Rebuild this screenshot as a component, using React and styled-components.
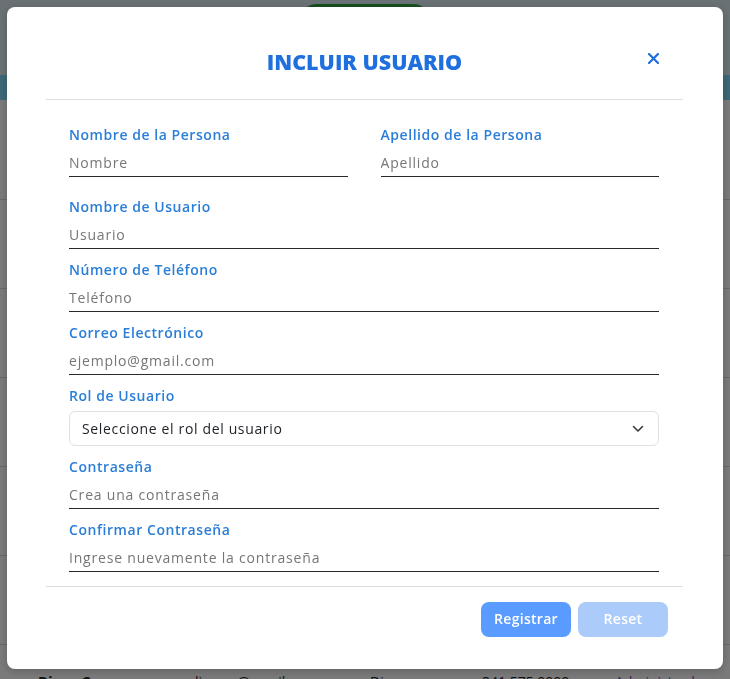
import styled, { createGlobalStyle } from 'styled-components';

const GlobalStyle = createGlobalStyle`
  * { box-sizing: border-box; }
  body {
    margin: 0;
    font-family: "Open Sans", "Liberation Sans", sans-serif;
    background: #f4f4f4;
  }
`;

// only the last row peeks out below the modal
const rows = [
  {},
  {},
  {},
  {},
  {},
  {},
  { name: 'Diego G', mail: 'diego.g@gmail.com', city: 'Dinamarca', phone: '341 575 0000', role: 'Administrador' },
];

const App = () => {
  return (
    <>
      <GlobalStyle />
      <Page>
        <TopBar>
          <GreenButton />
        </TopBar>
        <Banner />
        <Table>
          {rows.map((r, i) => (
            <Row key={i}>
              {r.name && (
                <>
                  <Cell $bold>{r.name}</Cell>
                  <Cell>{r.mail}</Cell>
                  <Cell>{r.city}</Cell>
                  <Cell>{r.phone}</Cell>
                  <Badge>{r.role}</Badge>
                </>
              )}
            </Row>
          ))}
        </Table>
      </Page>

      <Overlay>
        <Modal>
          <Header>
            <Title>INCLUIR USUARIO</Title>
            <CloseButton aria-label="cerrar">
              <svg width="11" height="11" viewBox="0 0 11 11">
                <path d="M1 1 L10 10 M10 1 L1 10" stroke="#1f6fde" strokeWidth="2.2" strokeLinecap="round" />
              </svg>
            </CloseButton>
          </Header>

          <Body>
            <TwoCols>
              <Field $first>
                <Label>Nombre de la Persona</Label>
                <Input placeholder="Nombre" />
              </Field>
              <Field $first>
                <Label>Apellido de la Persona</Label>
                <Input placeholder="Apellido" />
              </Field>
            </TwoCols>
            <Field>
              <Label>Nombre de Usuario</Label>
              <Input placeholder="Usuario" />
            </Field>
            <Field>
              <Label>Número de Teléfono</Label>
              <Input placeholder="Teléfono" />
            </Field>
            <Field>
              <Label>Correo Electrónico</Label>
              <Input placeholder="ejemplo@gmail.com" />
            </Field>
            <Field>
              <Label>Rol de Usuario</Label>
              <SelectBox>
                <span>Seleccione el rol del usuario</span>
                <svg width="12" height="8" viewBox="0 0 12 8">
                  <path d="M1.5 1.5 L6 6 L10.5 1.5" fill="none" stroke="#343a40" strokeWidth="1.6" strokeLinecap="round" strokeLinejoin="round" />
                </svg>
              </SelectBox>
            </Field>
            <Field>
              <Label>Contraseña</Label>
              <Input placeholder="Crea una contraseña" type="password" />
            </Field>
            <Field $last>
              <Label>Confirmar Contraseña</Label>
              <Input placeholder="Ingrese nuevamente la contraseña" type="password" />
            </Field>
          </Body>

          <Footer>
            <Button>Registrar</Button>
            <Button $disabled>Reset</Button>
          </Footer>
        </Modal>
      </Overlay>
    </>
  );
};

const Page = styled.div`
  height: 679px;
  overflow: hidden;
  display: flex;
  flex-direction: column;
`;

const TopBar = styled.div`
  height: 75px;
  flex-shrink: 0;
  display: flex;
  justify-content: center;
  padding: 4px 0 0 0;
  background: #d4e2ea;
`;

const GreenButton = styled.div`
  width: 132px;
  height: 36px;
  border-radius: 18px;
  background: #2e9e3e;
`;

const Banner = styled.div`
  height: 25px;
  flex-shrink: 0;
  background: #7ad0ee;
`;

const Table = styled.div`
  display: flex;
  flex-direction: column;
  padding-top: 11px;
`;

const Row = styled.div`
  height: 89px;
  flex-shrink: 0;
  display: grid;
  grid-template-columns: 152px 180px 112px 133px 1fr;
  align-items: start;
  padding: 27px 0 0 38px;
  border-bottom: 1px solid #d2d2d2;
  font-size: 14px;
  color: #222;
`;

const Cell = styled.div`
  font-weight: ${(p) => (p.$bold ? 700 : 400)};
  white-space: nowrap;
  overflow: hidden;
`;

const Badge = styled.div`
  color: #6f42c1;
  white-space: nowrap;
  overflow: hidden;
`;

const Overlay = styled.div`
  position: fixed;
  inset: 0;
  background: rgba(0, 0, 0, 0.5);
  display: flex;
  justify-content: center;
  align-items: flex-start;
  padding-top: 7px;
`;

const Modal = styled.div`
  width: 716px;
  background: #fff;
  border-radius: 8px;
  padding: 0 40px 0 39px;
  box-shadow: 0 2px 8px rgba(0, 0, 0, 0.2);
`;

const Header = styled.div`
  position: relative;
  padding: 40px 0 22px;
  border-bottom: 1px solid #dedede;
  display: flex;
  justify-content: center;
`;

const Title = styled.h2`
  margin: 0;
  font-size: 21.5px;
  line-height: 30px;
  font-weight: 800;
  color: #1f6fde;
`;

const CloseButton = styled.button`
  position: absolute;
  right: 24px;
  top: 46px;
  width: 11px;
  height: 11px;
  padding: 0;
  border: none;
  background: none;
  display: flex;
`;

const Body = styled.div`
  padding: 25px 24px 14px 23px;
  border-bottom: 1px solid #dedede;
`;

const TwoCols = styled.div`
  display: grid;
  grid-template-columns: 1fr 1fr;
  column-gap: 33px;
`;

const Field = styled.div`
  display: flex;
  flex-direction: column;
  margin-bottom: ${(p) => (p.$last ? 0 : p.$first ? '20px' : '11px')};
`;

const Label = styled.label`
  font-size: 14px;
  line-height: 20px;
  font-weight: 600;
  letter-spacing: 0.55px;
  color: #2a7ed8;
  margin-bottom: 5px;
`;

const Input = styled.input`
  height: 27px;
  border: none;
  border-bottom: 1px solid #2b2b2b;
  padding: 0 0 1px;
  font-family: inherit;
  font-size: 14px;
  letter-spacing: 0.8px;
  color: #333;
  outline: none;
  &::placeholder {
    color: #767676;
  }
`;

const SelectBox = styled.div`
  height: 35px;
  border: 1px solid #dee2e6;
  border-radius: 6px;
  padding: 0 14px 0 12px;
  display: flex;
  align-items: center;
  justify-content: space-between;
  font-size: 14px;
  letter-spacing: 0.65px;
  color: #212529;
`;

const Footer = styled.div`
  display: flex;
  justify-content: flex-end;
  gap: 7px;
  padding: 15px 15px 32px;
`;

const Button = styled.button`
  width: 90px;
  height: 35px;
  border: none;
  border-radius: 8px;
  font-family: inherit;
  font-size: 14px;
  font-weight: 600;
  letter-spacing: 0.3px;
  line-height: 33px;
  padding: 0 0 2px;
  color: #fff;
  background: ${(p) => (p.$disabled ? '#abcbfb' : '#5a9bff')};
`;

export default App;
